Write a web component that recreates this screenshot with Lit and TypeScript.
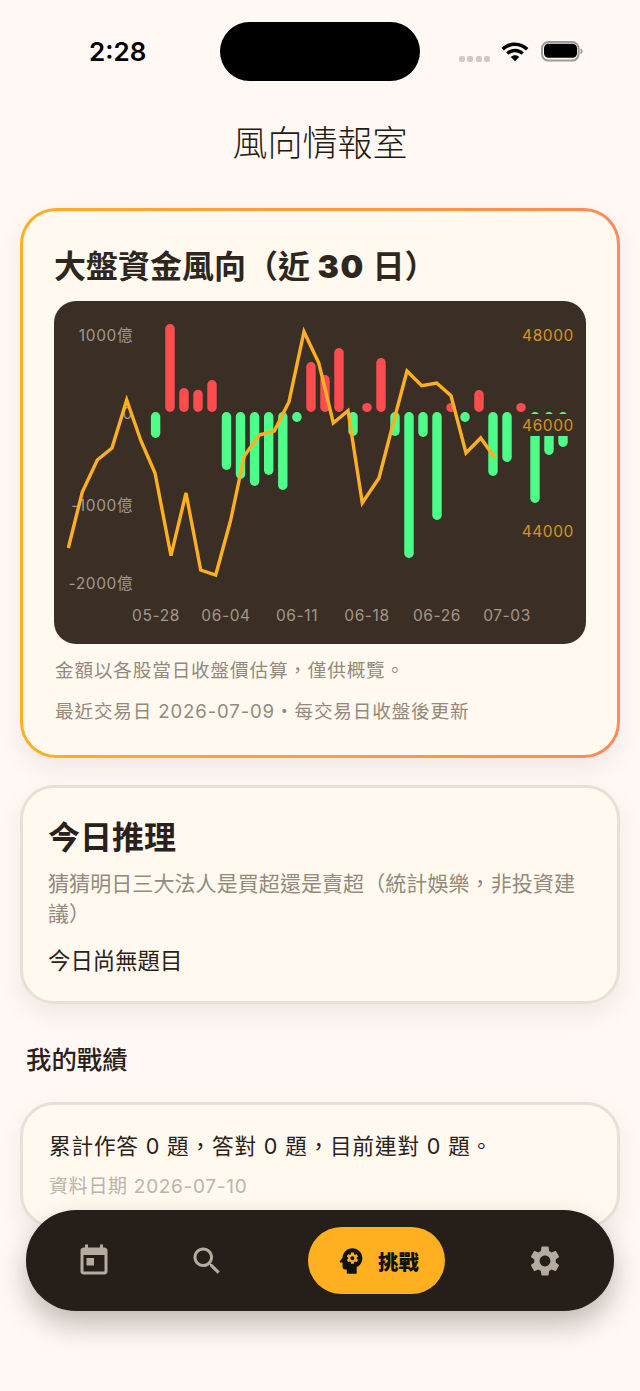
import { LitElement, html, css, svg } from "lit";
import { customElement } from "lit/decorators.js";

const P = {
  today: "M19 3h-1V1h-2v2H8V1H6v2H5c-1.11 0-1.99.9-1.99 2L3 19c0 1.1.89 2 2 2h14c1.1 0 2-.9 2-2V5c0-1.1-.9-2-2-2zm0 16H5V8h14v11zM7 10h5v5H7z",
  search: "M15.5 14h-.79l-.28-.27C15.41 12.59 16 11.11 16 9.5 16 5.91 13.09 3 9.5 3S3 5.91 3 9.5 5.91 16 9.5 16c1.61 0 3.09-.59 4.23-1.57l.27.28v.79l5 4.99L20.49 19l-4.99-5zm-6 0C7.01 14 5 11.99 5 9.5S7.01 5 9.5 5 14 7.01 14 9.5 11.99 14 9.5 14z",
  settings: "M19.14 12.94c.04-.3.06-.61.06-.94 0-.32-.02-.64-.07-.94l2.03-1.58c.18-.14.23-.41.12-.61l-1.92-3.32c-.12-.22-.37-.29-.59-.22l-2.39.96c-.5-.38-1.03-.7-1.62-.94l-.36-2.54c-.04-.24-.24-.41-.48-.41h-3.84c-.24 0-.43.17-.47.41l-.36 2.54c-.59.24-1.13.57-1.62.94l-2.39-.96c-.22-.08-.47 0-.59.22L2.74 8.87c-.12.21-.08.47.12.61l2.03 1.58c-.05.3-.09.63-.09.94s.02.64.07.94l-2.03 1.58c-.18.14-.23.41-.12.61l1.92 3.32c.12.22.37.29.59.22l2.39-.96c.5.38 1.03.7 1.62.94l.36 2.54c.05.24.24.41.48.41h3.84c.24 0 .44-.17.47-.41l.36-2.54c.59-.24 1.13-.56 1.62-.94l2.39.96c.22.08.47 0 .59-.22l1.92-3.32c.12-.22.07-.47-.12-.61l-2.01-1.58zM12 15.6c-1.98 0-3.6-1.62-3.6-3.6s1.62-3.6 3.6-3.6 3.6 1.62 3.6 3.6-1.62 3.6-3.6 3.6z",
  psy: "M13 8.57c-.79 0-1.43.64-1.43 1.43s.64 1.43 1.43 1.43 1.43-.64 1.43-1.43-.64-1.43-1.43-1.43zM13 3C9.25 3 6.2 5.94 6.02 9.64L4.1 12.2c-.25.33-.01.8.4.8H6v3c0 1.1.9 2 2 2h1v3h7v-4.68c2.36-1.12 4-3.53 4-6.32 0-3.87-3.13-7-7-7zm3 7c0 .13-.01.26-.02.39l.83.66c.08.06.1.16.05.25l-.8 1.39c-.05.09-.16.12-.24.09l-.99-.4c-.21.16-.43.29-.67.39L14 13.83c-.01.1-.1.17-.2.17h-1.6c-.1 0-.18-.07-.2-.17l-.15-1.06c-.25-.1-.47-.23-.68-.39l-.99.4c-.09.03-.2 0-.25-.09l-.8-1.39c-.05-.08-.03-.19.05-.25l.84-.66c-.01-.13-.02-.26-.02-.39s.02-.27.04-.39l-.85-.66c-.08-.06-.1-.16-.05-.26l.8-1.38c.05-.09.15-.12.24-.09l1 .4c.2-.15.43-.29.67-.39L12 6.17c.02-.1.1-.17.2-.17h1.6c.1 0 .18.07.2.17l.15 1.06c.24.1.46.23.67.39l1-.4c.09-.03.2 0 .24.09l.8 1.38c.05.09.03.2-.05.26l-.85.66c.03.12.04.25.04.39z",
};

const ZERO = 412;
const BARS: [number, number][] = [
  [155.6, 438], [170, 324], [184, 388], [198, 389.7], [212, 380], [226.5, 470], [240.5, 479], [254.6, 486],
  [268.7, 475], [282.8, 490], [296.9, 422], [311, 362], [325, 375], [339, 348], [353, 436], [367, 403],
  [381, 358], [395, 436], [409, 558], [423, 437], [437, 520], [451, 403], [465, 422], [479, 390],
  [493, 476], [507, 462], [521, 403], [535, 503], [549, 455], [563, 447],
];
const LINE: [number, number][] = [
  [68.3, 548], [82.3, 492], [97.3, 460], [112, 448], [126.7, 400], [141, 441], [155, 473], [171, 555.7],
  [186, 493], [200.7, 570], [215.7, 575], [230.7, 520], [244.3, 456], [259.3, 435], [274.3, 431], [289, 401.7],
  [304, 331.7], [318.8, 363], [333.3, 423], [348, 410.7], [362.3, 503], [379, 478], [393, 424], [407, 371],
  [421.7, 385.7], [436.7, 383], [451, 395.7], [466, 453], [480.7, 438], [495, 458],
];
const OX = 54, OY = 301;

@customElement("app-root")
export class AppRoot extends LitElement {
  static styles = css`
    :host { display: block; width: 640px; height: 1391px; overflow: hidden; position: relative; background: #fff8f5;
      font-family: Inter, "Noto Sans CJK TC", sans-serif; color: #2a211a; }
    .status { height: 103px; display: flex; align-items: flex-start; box-sizing: border-box; padding-top: 22px; }
    .time { width: 220px; box-sizing: border-box; padding: 13px 0 0 89px; font-size: 26px; font-weight: 600; line-height: 34px; color: #000; }
    .island { width: 200px; height: 59px; background: #000; border-radius: 30px; }
    .sys { display: flex; align-items: flex-start; padding-left: 39px; }
    .sys svg { display: block; }
    .wifi { margin-top: 17px; }
    .batt { margin: 18.7px 0 0 10.7px; }
    .dots { display: flex; gap: 2.4px; margin: 34px 10px 0 0; }
    .dots i { width: 6px; height: 6.4px; border-radius: 2px; background: #cfcac8; }
    .title { height: 79px; text-align: center; font-size: 35px; font-weight: 300; line-height: 81px; color: #231a13; }
    .wrap { padding: 26px 20px 0; display: flex; flex-direction: column; }
    .card { box-sizing: border-box; background: #fff9ef; border-radius: 36px; box-shadow: 0 10px 24px rgba(60,40,20,.08); }
    .hero { height: 550px; border: 3px solid transparent; padding: 31px 31px 0;
      background: linear-gradient(#fff9ef,#fff9ef) padding-box, linear-gradient(90deg,#ffb020,#ff8a5c) border-box; }
    .hero h2 { margin: 0; font-size: 32px; font-weight: 700; line-height: 50px; color: #2f261d; }
    .hero h2 b { font-weight: 900; letter-spacing: 1.6px; }
    .chart { position: relative; height: 343px; margin-top: 9px; background: #3b2f25; border-radius: 22px; overflow: hidden; }
    .chart svg { position: absolute; left: 0; top: 0; }
    .note { margin: 0; font-size: 18.6px; color: #94897d; line-height: 28px; padding-left: 1px; }
    .note.n1 { margin-top: 12px; letter-spacing: .85px; }
    .note.n2 { margin-top: 13px; letter-spacing: .85px; }
    .plain { border: 3px solid #e8e0d5; padding: 27px 25px 0; border-radius: 34px; }
    .quiz { height: 219px; margin-top: 27px; }
    .quiz h2 { margin: 0; font-size: 32px; font-weight: 700; line-height: 46px; color: #2a211a; }
    .quiz p { margin: 0; font-size: 21px; line-height: 30px; color: #94897d; }
    .quiz p.sub { margin-top: 8px; letter-spacing: .08px; }
    .quiz p.none { margin-top: 16px; font-size: 22.4px; line-height: 32px; color: #2a211a; }
    h3 { margin: 37px 6px 0; font-size: 25.4px; font-weight: 500; line-height: 38px; color: #2a211a; }
    .stats { height: 126px; margin-top: 23px; padding-top: 24px; }
    .stats p { margin: 0; font-size: 21.6px; line-height: 34px; color: #2a211a; letter-spacing: .85px; padding-left: 1px; }
    .stats p.date { margin-top: 9px; font-size: 19px; line-height: 30px; color: #bdb3a7; letter-spacing: .7px; }
    nav { position: absolute; left: 26px; top: 1210px; width: 588px; height: 101px; background: #261e18; border-radius: 50px;
      box-shadow: 0 14px 28px rgba(40,25,10,.28); display: grid; grid-template-columns: 136px 90px 249px 88px; align-items: center; }
    nav .it { display: flex; justify-content: center; }
    nav svg { fill: #b5aba0; display: block; }
    .pill { justify-self: center; width: 137px; height: 67px; border-radius: 34px; background: #ffb020; display: flex; align-items: center; justify-content: center; gap: 10px;
      font-size: 20.4px; font-weight: 900; color: #111; }
    nav .pill svg { fill: #111; }
  `;

  chart() {
    const w = 9.4;
    const bars = BARS.map(([x, y]) => {
      const top = Math.min(y, ZERO), h = Math.abs(y - ZERO);
      return svg`<rect x=${x - w / 2 - OX} y=${top - OY} width=${w} height=${h} rx=${w / 2} fill=${y < ZERO ? "#ff4d4f" : "#4dff88"}></rect>`;
    });
    const pts = LINE.map(([x, y]) => `${x - OX},${y - OY}`).join(" ");
    const lbl = (x: number, y: number, t: string, a: string, c: string) =>
      svg`<text x=${x} y=${y} text-anchor=${a} fill=${c} font-size="15.5" letter-spacing=".6">${t}</text>`;
    const L = "#a2978b", R = "#d4951f";
    return html`<svg width="532" height="343" font-family='Inter,"Noto Sans CJK TC",sans-serif'>
      ${bars}
      <rect x="468" y="113" width="64" height="22" fill="#3b2f25"></rect>
      ${lbl(79, 40, "1000億", "end", L)}
      ${lbl(79, 118, "0", "end", L)}
      ${lbl(79, 210, "-1000億", "end", L)}
      ${lbl(79, 288, "-2000億", "end", L)}
      ${lbl(520, 40, "48000", "end", R)}
      ${lbl(520, 130, "46000", "end", R)}
      ${lbl(520, 236, "44000", "end", R)}
      ${[["05-28", 102], ["06-04", 172], ["06-11", 243], ["06-18", 313], ["06-26", 383], ["07-03", 453]].map(([t, x]) => lbl(x as number, 320, t as string, "middle", L))}
      <polyline points=${pts} fill="none" stroke="#ffb020" stroke-width="3.4" stroke-linejoin="miter"></polyline>
    </svg>`;
  }

  render() {
    return html`
      <div class="status">
        <div class="time">2:28</div>
        <div class="island"></div>
        <div class="sys">
          <div class="dots"><i></i><i></i><i></i><i></i></div>
          <svg class="wifi" width="30" height="24" viewBox="0 0 28 22"><path fill="#000" d="M14 3C9 3 4.900 5 1.500 8.200L3.700 10.600C6.500 8 10 6.300 14 6.300S21.500 8 24.300 10.600L26.500 8.200C23.100 5 19 3 14 3ZM14 9C10.800 9 8 10.200 5.800 12.300L8 14.600C9.600 13.100 11.700 12.200 14 12.200S18.400 13.100 20 14.600L22.200 12.300C20 10.200 17.200 9 14 9ZM14 15C12.500 15 11.200 15.600 10.100 16.500L14 20.600L17.900 16.500C16.800 15.600 15.500 15 14 15Z"></path></svg>
          <svg class="batt" width="44" height="24" viewBox="0 0 44 24"><rect x="1" y="1" width="36.600" height="18.600" rx="6.500" fill="none" stroke="#9a9a9a" stroke-width="2"></rect><rect x="3" y="2.800" width="33" height="14" rx="4.500" fill="#000"></rect><path d="M39.500 7.500c1.500.4 2 1.500 2 2.800s-.5 2.400-2 2.800z" fill="#9a9a9a"></path></svg>
        </div>
      </div>
      <div class="title">風向情報室</div>
      <div class="wrap">
        <section class="card hero">
          <h2>大盤資金風向（近 <b>30</b> 日）</h2>
          <div class="chart">${this.chart()}</div>
          <p class="note n1">金額以各股當日收盤價估算，僅供概覽。</p>
          <p class="note n2">最近交易日 2026-07-09・每交易日收盤後更新</p>
        </section>
        <section class="card plain quiz">
          <h2>今日推理</h2>
          <p class="sub">猜猜明日三大法人是買超還是賣超（統計娛樂，非投資建議）</p>
          <p class="none">今日尚無題目</p>
        </section>
        <h3>我的戰績</h3>
        <section class="card plain stats">
          <p>累計作答 0 題，答對 0 題，目前連對 0 題。</p>
          <p class="date">資料日期 2026-07-10</p>
        </section>
      </div>
      <nav>
        <div class="it"><svg width="36" height="36" viewBox="0 0 24 24"><path d=${P.today}></path></svg></div>
        <div class="it"><svg width="36" height="36" viewBox="0 0 24 24"><path d=${P.search}></path></svg></div>
        <div class="pill"><svg width="34" height="34" viewBox="0 0 24 24"><path fill-rule="evenodd" d=${P.psy}></path></svg><span>挑戰</span></div>
        <div class="it"><svg width="36" height="36" viewBox="0 0 24 24"><path d=${P.settings}></path></svg></div>
      </nav>
    `;
  }
}
